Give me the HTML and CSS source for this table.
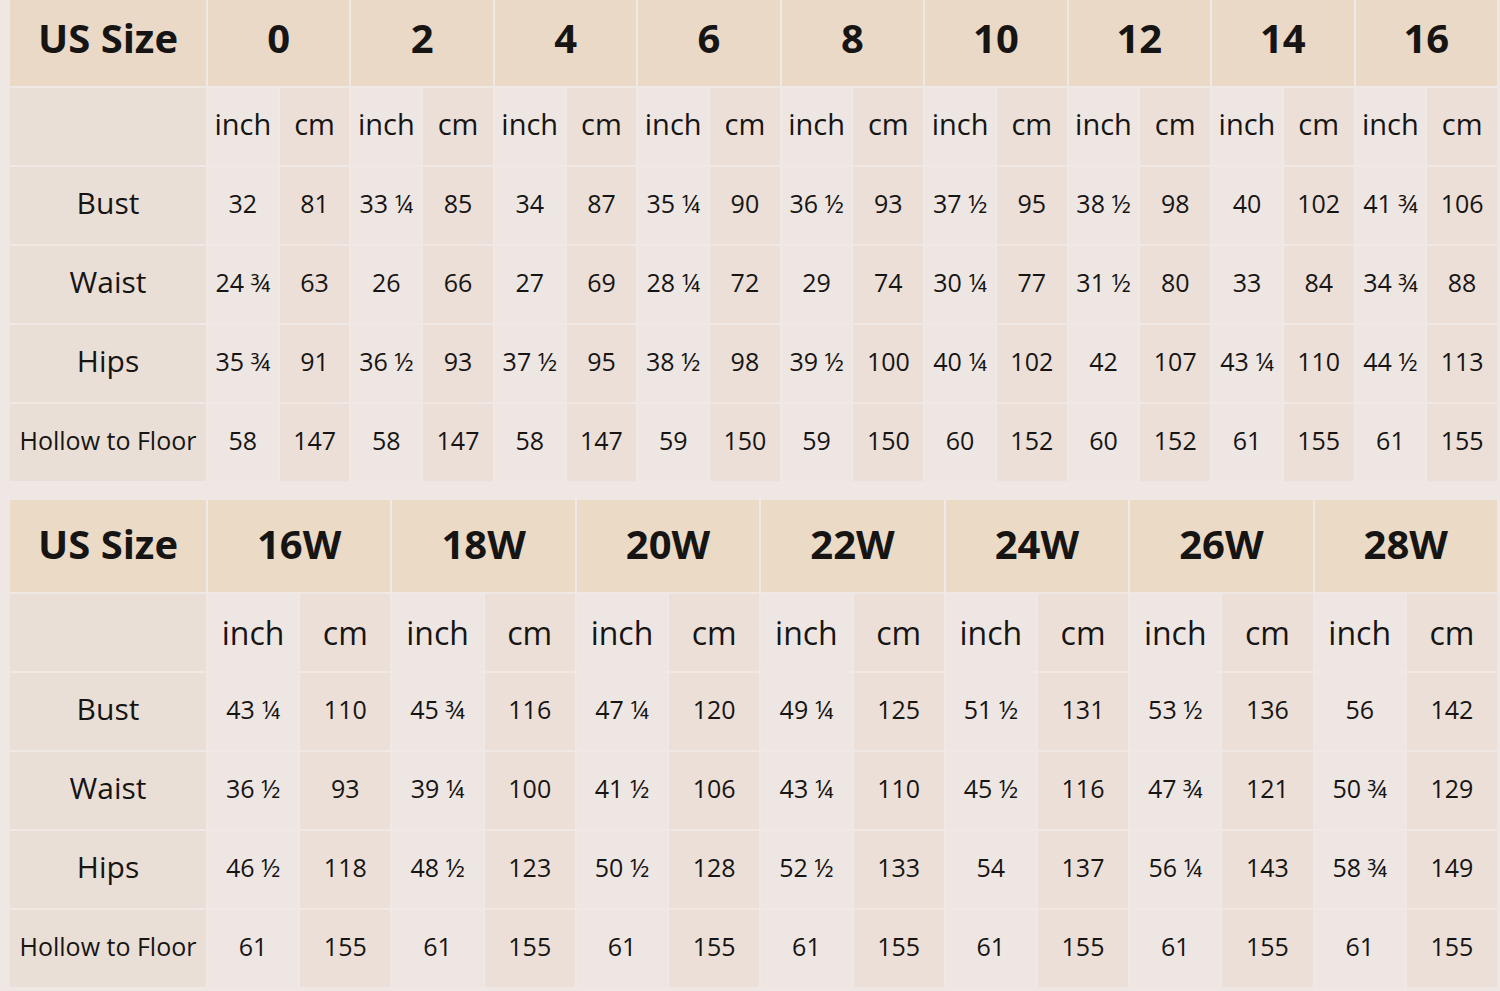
FILE: index.html
```html
<!DOCTYPE html>
<html>
<head>
<meta charset="utf-8">
<link rel="stylesheet" href="styles.css">
</head>
<body>
<div class="page">
  <div class="chart chart-a">
    <div class="hd label">US Size</div>
    <div class="hd size">0</div><div class="hd size">2</div><div class="hd size">4</div><div class="hd size">6</div><div class="hd size">8</div><div class="hd size">10</div><div class="hd size">12</div><div class="hd size">14</div><div class="hd size">16</div>

    <div class="lab"></div>
    <div class="in u">inch</div><div class="cm u">cm</div><div class="in u">inch</div><div class="cm u">cm</div><div class="in u">inch</div><div class="cm u">cm</div><div class="in u">inch</div><div class="cm u">cm</div><div class="in u">inch</div><div class="cm u">cm</div><div class="in u">inch</div><div class="cm u">cm</div><div class="in u">inch</div><div class="cm u">cm</div><div class="in u">inch</div><div class="cm u">cm</div><div class="in u">inch</div><div class="cm u">cm</div>

    <div class="lab">Bust</div>
    <div class="in">32</div><div class="cm">81</div><div class="in">33 ¼</div><div class="cm">85</div><div class="in">34</div><div class="cm">87</div><div class="in">35 ¼</div><div class="cm">90</div><div class="in">36 ½</div><div class="cm">93</div><div class="in">37 ½</div><div class="cm">95</div><div class="in">38 ½</div><div class="cm">98</div><div class="in">40</div><div class="cm">102</div><div class="in">41 ¾</div><div class="cm">106</div>

    <div class="lab">Waist</div>
    <div class="in">24 ¾</div><div class="cm">63</div><div class="in">26</div><div class="cm">66</div><div class="in">27</div><div class="cm">69</div><div class="in">28 ¼</div><div class="cm">72</div><div class="in">29</div><div class="cm">74</div><div class="in">30 ¼</div><div class="cm">77</div><div class="in">31 ½</div><div class="cm">80</div><div class="in">33</div><div class="cm">84</div><div class="in">34 ¾</div><div class="cm">88</div>

    <div class="lab">Hips</div>
    <div class="in">35 ¾</div><div class="cm">91</div><div class="in">36 ½</div><div class="cm">93</div><div class="in">37 ½</div><div class="cm">95</div><div class="in">38 ½</div><div class="cm">98</div><div class="in">39 ½</div><div class="cm">100</div><div class="in">40 ¼</div><div class="cm">102</div><div class="in">42</div><div class="cm">107</div><div class="in">43 ¼</div><div class="cm">110</div><div class="in">44 ½</div><div class="cm">113</div>

    <div class="lab small">Hollow to Floor</div>
    <div class="in">58</div><div class="cm">147</div><div class="in">58</div><div class="cm">147</div><div class="in">58</div><div class="cm">147</div><div class="in">59</div><div class="cm">150</div><div class="in">59</div><div class="cm">150</div><div class="in">60</div><div class="cm">152</div><div class="in">60</div><div class="cm">152</div><div class="in">61</div><div class="cm">155</div><div class="in">61</div><div class="cm">155</div>
  </div>

  <div class="chart chart-b">
    <div class="hd label">US Size</div>
    <div class="hd size">16W</div><div class="hd size">18W</div><div class="hd size">20W</div><div class="hd size">22W</div><div class="hd size">24W</div><div class="hd size">26W</div><div class="hd size">28W</div>

    <div class="lab"></div>
    <div class="in u">inch</div><div class="cm u">cm</div><div class="in u">inch</div><div class="cm u">cm</div><div class="in u">inch</div><div class="cm u">cm</div><div class="in u">inch</div><div class="cm u">cm</div><div class="in u">inch</div><div class="cm u">cm</div><div class="in u">inch</div><div class="cm u">cm</div><div class="in u">inch</div><div class="cm u">cm</div>

    <div class="lab">Bust</div>
    <div class="in">43 ¼</div><div class="cm">110</div><div class="in">45 ¾</div><div class="cm">116</div><div class="in">47 ¼</div><div class="cm">120</div><div class="in">49 ¼</div><div class="cm">125</div><div class="in">51 ½</div><div class="cm">131</div><div class="in">53 ½</div><div class="cm">136</div><div class="in">56</div><div class="cm">142</div>

    <div class="lab">Waist</div>
    <div class="in">36 ½</div><div class="cm">93</div><div class="in">39 ¼</div><div class="cm">100</div><div class="in">41 ½</div><div class="cm">106</div><div class="in">43 ¼</div><div class="cm">110</div><div class="in">45 ½</div><div class="cm">116</div><div class="in">47 ¾</div><div class="cm">121</div><div class="in">50 ¾</div><div class="cm">129</div>

    <div class="lab">Hips</div>
    <div class="in">46 ½</div><div class="cm">118</div><div class="in">48 ½</div><div class="cm">123</div><div class="in">50 ½</div><div class="cm">128</div><div class="in">52 ½</div><div class="cm">133</div><div class="in">54</div><div class="cm">137</div><div class="in">56 ¼</div><div class="cm">143</div><div class="in">58 ¾</div><div class="cm">149</div>

    <div class="lab small">Hollow to Floor</div>
    <div class="in">61</div><div class="cm">155</div><div class="in">61</div><div class="cm">155</div><div class="in">61</div><div class="cm">155</div><div class="in">61</div><div class="cm">155</div><div class="in">61</div><div class="cm">155</div><div class="in">61</div><div class="cm">155</div><div class="in">61</div><div class="cm">155</div>
  </div>
</div>
</body>
</html>
```

FILE: styles.css
```css
html, body {
  margin: 0;
  padding: 0;
  background: #efe7e3;
}

.page {
  width: 1487px;
  padding: 0 3px 0 10px;
  display: flex;
  flex-direction: column;
  gap: 19px;
  font-family: "Open Sans", "Noto Sans", sans-serif;
  color: #161514;
}

.chart {
  display: grid;
  gap: 2px;
  background: #efe8e4;
}

.chart-a {
  grid-template-columns: 196px repeat(18, 1fr);
  grid-template-rows: 86px repeat(5, 77px);
}

.chart-b {
  grid-template-columns: 196px repeat(14, 1fr);
  grid-template-rows: 92px repeat(5, 77px);
}

.chart > div {
  display: flex;
  align-items: center;
  justify-content: center;
  white-space: nowrap;
  padding-bottom: 6px;
  box-sizing: border-box;
}

.hd {
  background: #ead9c7;
  font-weight: 700;
  font-size: 40px;
}

.chart > .hd {
  padding-bottom: 11px;
}

.chart-b .hd {
  background: #ebdbc6;
}

.chart-b > .hd {
  padding-bottom: 6px;
}

.hd.size {
  grid-column: span 2;
}

.lab {
  background: #eadfd7;
  font-size: 30px;
}

.lab.small {
  font-size: 25px;
}

.in {
  background: #eee6e3;
  font-size: 25px;
}

.cm {
  background: #ebdfd8;
  font-size: 25px;
}

.u {
  font-size: 29px;
}

.chart-b .u {
  font-size: 32px;
}

.chart-b > .u {
  padding-bottom: 1px;
}
```
